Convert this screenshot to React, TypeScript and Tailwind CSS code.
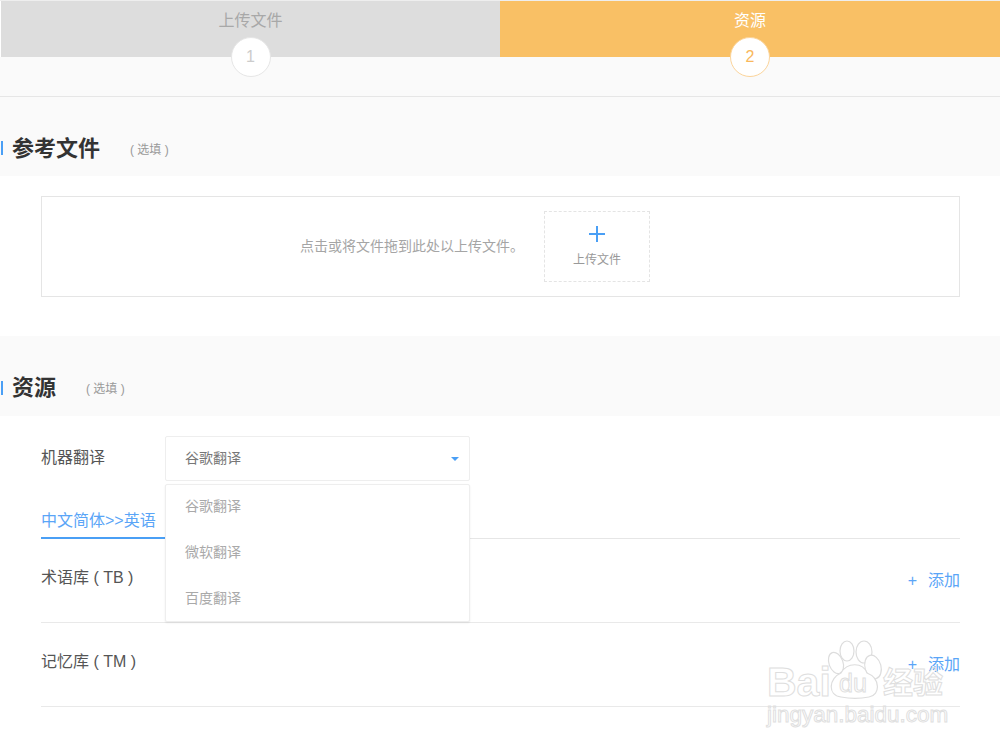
const font = "font-['Liberation_Sans','Noto_Sans_CJK_SC',sans-serif]";

function Step({ label, num, active }: { label: string; num: string; active?: boolean }) {
  return (
    <div className={`relative h-[56px] text-center ${active ? "w-[500px] bg-[#f9c065] text-white" : "w-[499px] bg-[#dddddd] text-[#a8a8a8]"}`}>
      <div className="pt-[9px] text-[16px] leading-[22px]">{label}</div>
      <div className={`absolute left-1/2 top-[36px] -ml-[20px] w-[40px] h-[40px] rounded-full bg-white border flex items-center justify-center text-[16px] ${active ? "border-[#fbd49a] text-[#f9b85c]" : "border-[#e6e6e6] text-[#cccccc]"}`}>
        {num}
      </div>
    </div>
  );
}

function SectionTitle({ title, h, pt, barTop }: { title: string; h: string; pt: string; barTop: string }) {
  return (
    <div className={`relative ${h} ${pt} bg-[#fafafa] flex items-center pl-[12px]`}>
      <div className={`absolute left-[1px] ${barTop} w-[2px] h-[14px] bg-[#4a9ff5]`} />
      <h2 className="text-[22px] font-bold leading-[30px] text-[#333333]">{title}</h2>
      <span className="ml-[30px] text-[12px] text-[#999999] mt-[1px] whitespace-pre">( 选填 )</span>
    </div>
  );
}

function ResourceRow({ label }: { label: string }) {
  return (
    <div className="h-[84px] flex justify-between border-b border-[#e9e9e9] pt-[28px] text-[16px] leading-[22px]">
      <span className="text-[#555555]">{label}</span>
      <span className="text-[#5aa5f7] pt-[3px]"><span className="mr-[11px]">+</span>添加</span>
    </div>
  );
}

function Watermark() {
  return (
    <div className="absolute left-[765px] top-[640px] w-[190px] h-[90px] pointer-events-none">
      <svg className="absolute left-0 top-0" width="190" height="60" viewBox="0 0 190 60" fill="none" stroke="#dddddd" strokeWidth="1.2">
        <ellipse cx="71" cy="23" rx="7" ry="11" transform="rotate(-20 71 23)" fill="#ffffff" />
        <ellipse cx="82" cy="11" rx="7" ry="10" fill="#ffffff" />
        <ellipse cx="99" cy="12" rx="8" ry="11" fill="#ffffff" />
        <ellipse cx="108" cy="27" rx="8" ry="12" transform="rotate(-15 108 27)" fill="#ffffff" />
        <path d="M76 57 C 62 55 64 38 76 33 C 82 22 98 22 102 33 C 115 38 116 55 104 57 C 94 59 86 59 76 57 Z" fill="#ffffff" />
      </svg>
      <div className="absolute left-[2px] top-[20px] text-[41px] leading-[44px] font-bold text-transparent [-webkit-text-stroke:1px_#dedede]">Bai</div>
      <div className="absolute left-[74px] top-[30px] text-[25px] leading-[26px] text-transparent [-webkit-text-stroke:1px_#dedede]">du</div>
      <div className="absolute left-[118px] top-[26px] text-[30px] leading-[34px] font-bold text-transparent [-webkit-text-stroke:1px_#dedede]">经验</div>
      <div className="absolute left-[2px] top-[61px] text-[22.5px] leading-[28px] text-transparent [-webkit-text-stroke:1px_#e0e0e0] whitespace-nowrap">jingyan.baidu.com</div>
    </div>
  );
}

export default function App() {
  return (
    <div className={`relative w-[1000px] h-[748px] overflow-hidden bg-white ${font}`}>
      <div className="h-[1px] bg-[#eeeeee]" />
      <div className="flex pl-[1px]">
        <Step label="上传文件" num="1" />
        <Step label="资源" num="2" active />
      </div>
      <div className="h-[40px] bg-[#fafafa] border-b border-[#e6e6e6]" />

      <SectionTitle title="参考文件" h="h-[79px]" pt="pt-[25px]" barTop="top-[44px]" />
      <div className="h-[160px] pl-[41px] pr-[40px] pt-[20px]">
        <div className="h-[101px] border border-[#e5e5e5] flex items-center pl-[258px]">
          <span className="text-[14px] text-[#a5a5a5] w-[244px]">点击或将文件拖到此处以上传文件。</span>
          <div className="w-[106px] h-[71px] border border-dashed border-[#e4e4e4] flex flex-col items-center text-[#999999]">
            <svg className="mt-[14px]" width="16" height="16" viewBox="0 0 16 16" fill="none" stroke="#4a9ff5" strokeWidth="2">
              <path d="M8 0v16M0 8h16" />
            </svg>
            <span className="text-[12px] leading-[16px] mt-[10px]">上传文件</span>
          </div>
        </div>
      </div>

      <SectionTitle title="资源" h="h-[80px]" pt="pt-[24px]" barTop="top-[45px]" />
      <div className="pl-[41px] pr-[40px]">
        <div className="flex pt-[20px] h-[65px]">
          <span className="w-[124px] text-[16px] leading-[44px] text-[#555555]">机器翻译</span>
          <div className="w-[305px] h-[45px] border border-[#eeeeee] rounded-[2px] flex items-center justify-between pl-[19px] pr-[10px] text-[14px] text-[#777777]">
            谷歌翻译
            <span className="w-0 h-0 border-x-[4px] border-x-transparent border-t-[4px] border-t-[#4a9ff5]" />
          </div>
        </div>
        <div className="h-[58px] border-b border-[#e6e6e6] flex items-end">
          <div className="h-[39px] w-[124px] border-b-2 border-[#4a9ff5] -mb-[1px] pt-[6px] text-[16px] leading-[30px] text-[#5aa5f7]">中文简体&gt;&gt;英语</div>
        </div>
        <ResourceRow label="术语库 ( TB )" />
        <ResourceRow label="记忆库 ( TM )" />
      </div>

      <div className="absolute left-[165px] top-[484px] w-[305px] h-[138px] bg-white border border-[#eeeeee] rounded-[2px] shadow-[0_1px_2px_rgba(0,0,0,0.08)] text-[14px] text-[#a9a9a9]">
        {["谷歌翻译", "微软翻译", "百度翻译"].map(o => (
          <div key={o} className="h-[46px] leading-[42px] pl-[19px]">{o}</div>
        ))}
      </div>

      <Watermark />
    </div>
  );
}
